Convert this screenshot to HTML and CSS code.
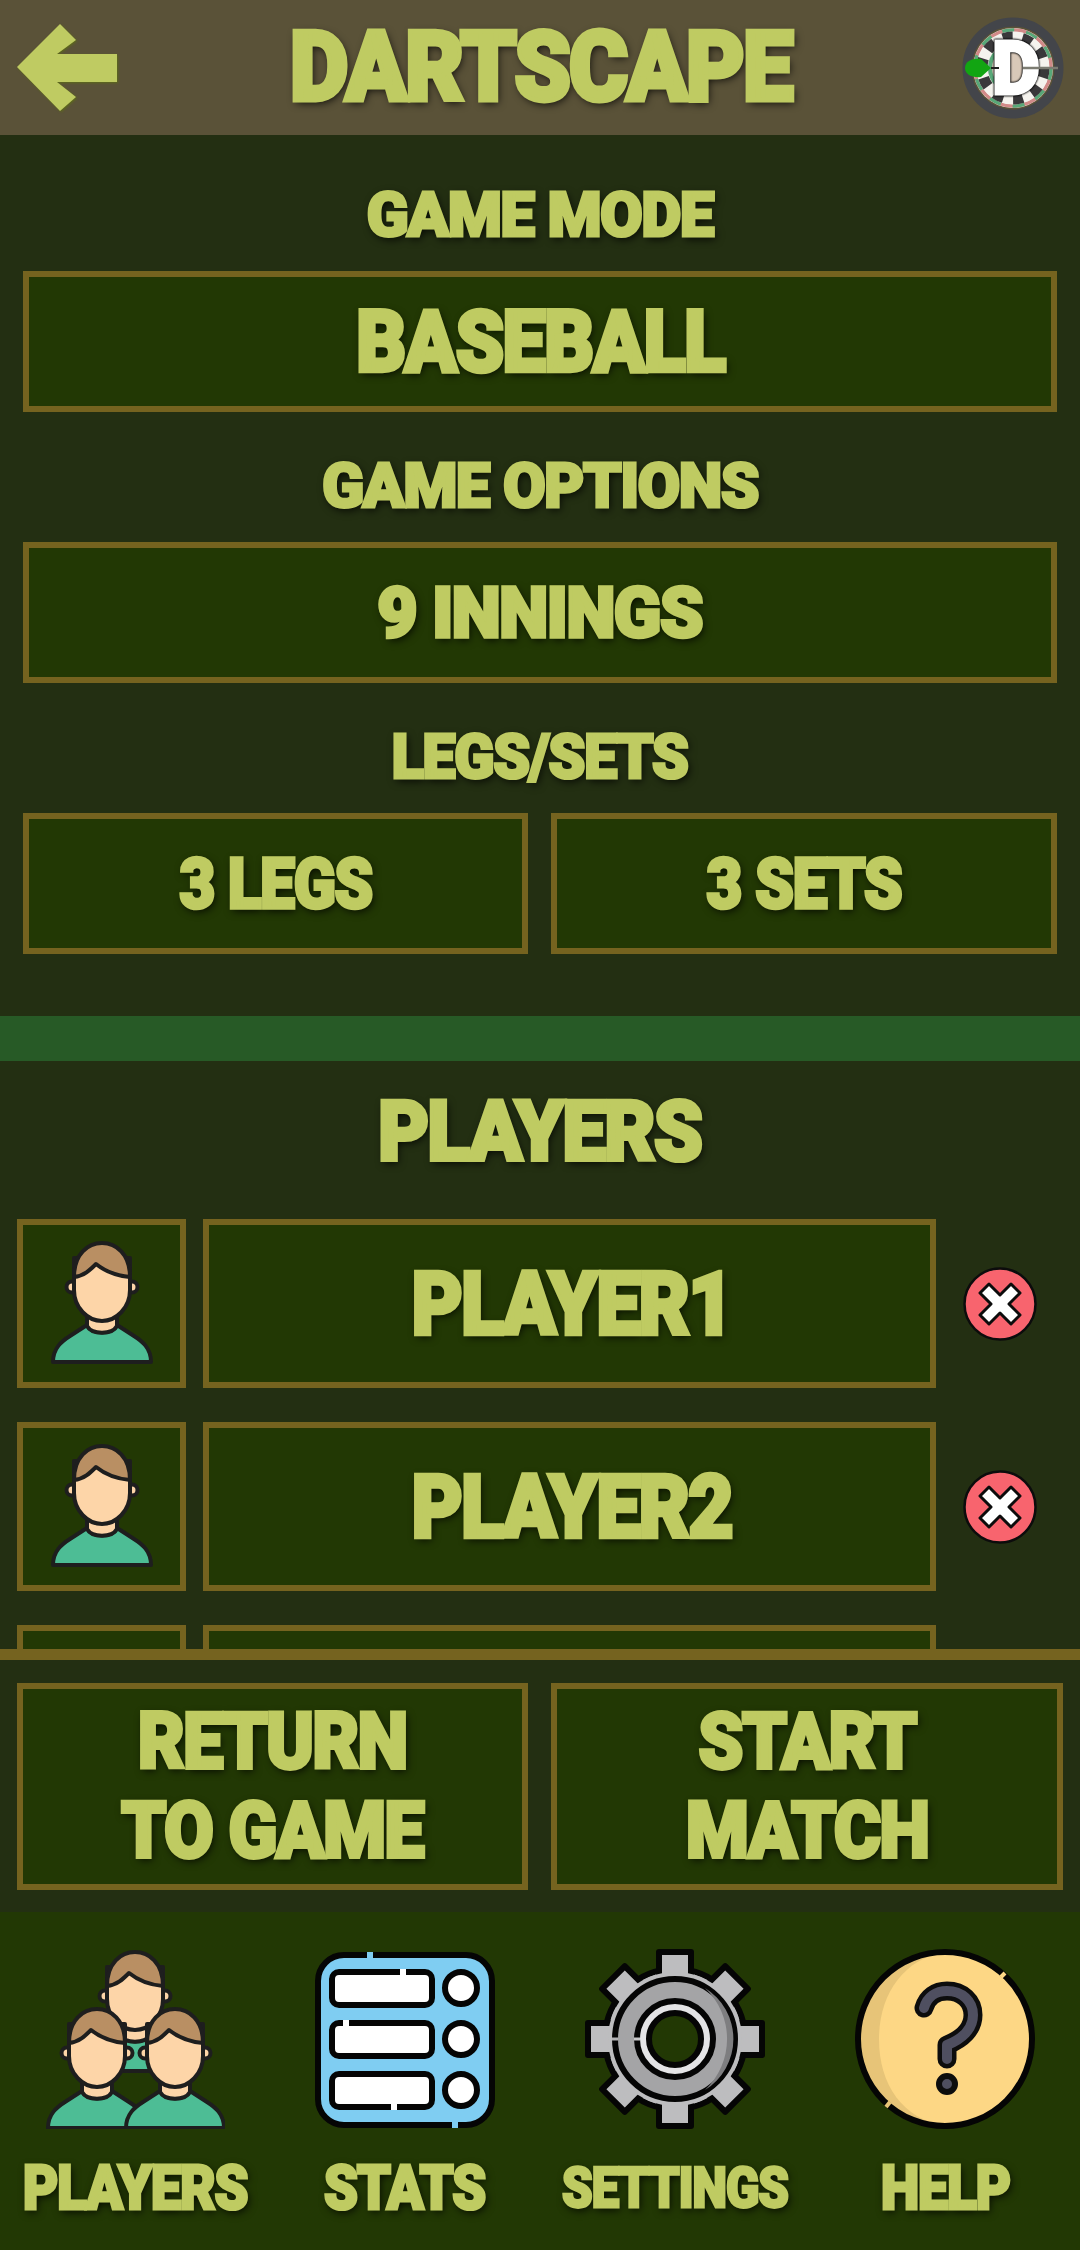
FILE: index.html
```html
<!DOCTYPE html>
<html lang="en">
<head>
<meta charset="utf-8">
<title>Dartscape</title>
<link rel="stylesheet" href="styles.css">
</head>
<body>
<svg class="defs" width="0" height="0" aria-hidden="true">
  <symbol id="person" viewBox="0 0 104 124" overflow="visible">
    <g stroke="#1e1e1e" stroke-width="4" stroke-linejoin="round">
      <path d="M3 122C3 108 12 101 20 96L37 85C42 95 62 95 67 85L84 96C92 101 101 108 101 122Z" fill="#4dbd95"/>
      <path d="M37 74V86C42 95 62 95 67 86V74Z" fill="#fdd5a8"/>
      <circle cx="22" cy="47" r="5.5" fill="#fdd5a8"/>
      <circle cx="82" cy="47" r="5.5" fill="#fdd5a8"/>
      <path d="M24 18V50C24 68 38 81 52 81C66 81 80 68 80 50V18Z" fill="#fdd5a8"/>
      <path d="M24 37C24 14 38 3 52 3C66 3 80 14 80 37C68 36 56 32 46 24C40 30 34 36 24 37Z" fill="#b98f63"/>
    </g>
  </symbol>
  <symbol id="remove" viewBox="0 0 76 76">
    <circle cx="38" cy="38" r="35.5" fill="#f8646e" stroke="#0c0c0c" stroke-width="2.5"/>
    <path d="M18 27L27 18L38 29L49 18L58 27L47 38L58 49L49 58L38 47L27 58L18 49L29 38Z" fill="#fff" stroke="#0c0c0c" stroke-width="3" stroke-linejoin="round"/>
  </symbol>
</svg>

<header class="topbar">
  <svg class="arrow" viewBox="0 0 104 90" width="104" height="90" aria-label="Back">
    <path d="M1 44L44 1L60 17L41 31H101V59H41L60 74L44 88Z" fill="#bfcb62"/>
  </svg>
  <h1 class="title"><span class="squeeze s93">DARTSCAPE</span></h1>
  <svg class="logo" viewBox="0 0 104 104" width="104" height="104" aria-label="Dartscape logo">
    <circle cx="52" cy="52" r="46" fill="none" stroke="#43454a" stroke-width="9"/>
    <circle cx="52" cy="52" r="40" fill="#e8e4dc"/>
    <circle cx="52" cy="52" r="38" fill="none" stroke="#d28a88" stroke-width="3.5"/>
    <circle cx="52" cy="52" r="38" fill="none" stroke="#58a878" stroke-width="3.5" stroke-dasharray="12 12"/>
    <circle cx="52" cy="52" r="31" fill="none" stroke="#f5f3ee" stroke-width="11"/>
    <circle cx="52" cy="52" r="31" fill="none" stroke="#39383a" stroke-width="11" stroke-dasharray="9.7 9.7"/>
    <circle cx="52" cy="52" r="23" fill="#d8c8b8" stroke="#58a878" stroke-width="4"/>
    <text class="logo-d" x="55" y="78" text-anchor="middle">D</text>
    <path d="M4 52C4 45 12 42 20 43L30 52L20 61C12 62 4 59 4 52Z" fill="#12a512"/>
    <path d="M30 52H38" stroke="#222" stroke-width="2"/>
    <path d="M62 52H97" stroke="#7c7c72" stroke-width="2.5"/>
  </svg>
</header>

<section class="setup">
  <h2 class="label"><span class="squeeze s99">GAME MODE</span></h2>
  <div class="box field"><span class="squeeze s91 value-lg">BASEBALL</span></div>
  <h2 class="label"><span class="squeeze s99">GAME OPTIONS</span></h2>
  <div class="box field"><span class="squeeze value-md s98">9 INNINGS</span></div>
  <h2 class="label"><span class="squeeze s95">LEGS/SETS</span></h2>
  <div class="pair">
    <div class="box field"><span class="squeeze value-md s87">3 LEGS</span></div>
    <div class="box field"><span class="squeeze value-md s87">3 SETS</span></div>
  </div>
</section>

<div class="band"></div>

<section class="players">
  <h2 class="players-title"><span class="squeeze s93">PLAYERS</span></h2>
  <div class="row">
    <div class="box avatar"><svg class="person" width="104" height="124"><use href="#person"/></svg></div>
    <div class="box name"><span class="squeeze s90">PLAYER1</span></div>
    <div class="remove-cell"><svg width="76" height="76"><use href="#remove"/></svg></div>
  </div>
  <div class="row">
    <div class="box avatar"><svg class="person" width="104" height="124"><use href="#person"/></svg></div>
    <div class="box name"><span class="squeeze s90">PLAYER2</span></div>
    <div class="remove-cell"><svg width="76" height="76"><use href="#remove"/></svg></div>
  </div>
  <div class="row">
    <div class="box avatar"></div>
    <div class="box name"></div>
    <div class="remove-cell"></div>
  </div>
</section>

<section class="actions">
  <div class="box action"><span class="squeeze s93">RETURN<br>TO GAME</span></div>
  <div class="box action"><span class="squeeze s93">START<br>MATCH</span></div>
</section>

<nav class="tabs">
  <div class="tab">
    <svg viewBox="0 0 180 180" width="180" height="180">
      <use href="#person" x="38" y="0" width="104" height="124"/>
      <use href="#person" x="0" y="57" width="104" height="124"/>
      <use href="#person" x="78" y="57" width="104" height="124"/>
    </svg>
    <span class="squeeze s89 tab-label">PLAYERS</span>
  </div>
  <div class="tab">
    <svg viewBox="0 0 180 180" width="180" height="180">
      <rect x="3" y="6" width="174" height="170" rx="26" fill="#7fcdf2" stroke="#050505" stroke-width="6"/>
      <g fill="#fff" stroke="#050505" stroke-width="6">
        <rect x="17" y="23" width="100" height="33" rx="7"/>
        <rect x="17" y="74" width="100" height="33" rx="7"/>
        <rect x="17" y="125" width="100" height="33" rx="7"/>
        <circle cx="146" cy="39" r="16"/>
        <circle cx="146" cy="90" r="16"/>
        <circle cx="146" cy="141" r="16"/>
      </g>
      <path d="M52 6h6M137 176h6" stroke="#7fcdf2" stroke-width="6"/>
      <path d="M85 23h6M28 74h6M76 158h6" stroke="#fff" stroke-width="6"/>
    </svg>
    <span class="squeeze s89 tab-label">STATS</span>
  </div>
  <div class="tab">
    <svg viewBox="0 0 180 180" width="180" height="180">
      <circle cx="90" cy="90" r="70" fill="#bdbdbf" stroke="#050505" stroke-width="6"/>
      <g fill="#bdbdbf" stroke="#050505" stroke-width="6" stroke-linejoin="round">
        <rect x="74" y="3" width="32" height="40"/>
        <rect x="74" y="3" width="32" height="40" transform="rotate(45 90 90)"/>
        <rect x="74" y="3" width="32" height="40" transform="rotate(90 90 90)"/>
        <rect x="74" y="3" width="32" height="40" transform="rotate(135 90 90)"/>
        <rect x="74" y="3" width="32" height="40" transform="rotate(180 90 90)"/>
        <rect x="74" y="3" width="32" height="40" transform="rotate(225 90 90)"/>
        <rect x="74" y="3" width="32" height="40" transform="rotate(270 90 90)"/>
        <rect x="74" y="3" width="32" height="40" transform="rotate(315 90 90)"/>
      </g>
      <circle cx="90" cy="90" r="67" fill="#bdbdbf"/>
      <circle cx="90" cy="90" r="60" fill="#a4a4a6" stroke="#050505" stroke-width="6"/>
      <path d="M120 39A60 60 0 0 1 120 141A70 70 0 0 0 120 39Z" fill="#7e7e80"/>
      <circle cx="90" cy="90" r="38" fill="#e4e4e6" stroke="#050505" stroke-width="6"/>
      <circle cx="90" cy="90" r="26" fill="#223804" stroke="#050505" stroke-width="6"/>
      <path d="M27 90h6" stroke="#b0b0b2" stroke-width="3"/>
      <path d="M49 90h6" stroke="#c8c8ca" stroke-width="3"/>
    </svg>
    <span class="squeeze s89 tab-label tab-label-sm">SETTINGS</span>
  </div>
  <div class="tab">
    <svg viewBox="0 0 180 180" width="180" height="180">
      <circle cx="90" cy="90" r="87" fill="#e7c478"/>
      <path d="M90 3A87 87 0 0 1 90 177C48 170 24 136 24 90C24 46 48 10 90 3Z" fill="#fdd785"/>
      <circle cx="90" cy="90" r="87" fill="none" stroke="#050505" stroke-width="6"/>
      <path d="M146 28L150 24" stroke="#fdd785" stroke-width="4"/>
      <path d="M35 153L31 158" stroke="#e7c478" stroke-width="4"/>
      <path d="M69 59C72 48 81 42 92 42C107 42 118 52 118 66C118 80 107 90 92 96V110" fill="none" stroke="#0d0d0d" stroke-width="19" stroke-linecap="round" stroke-linejoin="round"/>
      <path d="M69 59C72 48 81 42 92 42C107 42 118 52 118 66C118 80 107 90 92 96V110" fill="none" stroke="#4f4f60" stroke-width="10" stroke-linecap="round" stroke-linejoin="round"/>
      <circle cx="92" cy="135" r="8" fill="#4f4f60" stroke="#0d0d0d" stroke-width="6"/>
    </svg>
    <span class="squeeze s89 tab-label">HELP</span>
  </div>
</nav>
</body>
</html>
```
FILE: styles.css
```css
* { box-sizing: border-box; margin: 0; padding: 0; }

html, body { height: 2250px; }

body {
  display: flex;
  flex-direction: column;
  overflow: hidden;
  background: #232f12;
  color: #bfcb62;
  font-family: Roboto, "Liberation Sans", sans-serif;
  font-weight: 900;
}

.defs { position: absolute; }

.squeeze {
  display: inline-block;
  white-space: nowrap;
  text-align: center;
  transform: scaleX(.9);
  letter-spacing: -.02em;
  -webkit-text-stroke: .05em #bfcb62;
  text-shadow: 2px 3px 9px rgba(0, 0, 0, .85);
}

.s87 { transform: scaleX(.87); }
.s89 { transform: scaleX(.89); }
.s90 { transform: scaleX(.9); }
.s91 { transform: scaleX(.91); }
.s93 { transform: scaleX(.93); }
.s95 { transform: scaleX(.95); }
.s98 { transform: scaleX(.98); }
.s99 { transform: scaleX(.99); }

.topbar {
  flex: none;
  height: 135px;
  display: grid;
  grid-template-columns: 1fr auto 1fr;
  align-items: center;
  padding: 0 15px 0 16px;
  background: #5a5238;
}

.arrow { filter: drop-shadow(1px 1px 1px #5c6a18); }
.logo { justify-self: end; }
.logo-d {
  font-family: Roboto, sans-serif;
  font-size: 74px;
  font-weight: 900;
  fill: #fff;
  stroke: #fff;
  stroke-width: 3;
  filter: drop-shadow(0 0 1px #000) drop-shadow(0 0 .5px #000);
}

.title { font-size: 97px; font-weight: 900; line-height: 1; text-align: center; }

.setup { flex: none; padding: 0 23px 62px; }

.label {
  height: 130px;
  padding-top: 16px;
  display: flex;
  align-items: center;
  justify-content: center;
  font-size: 62px;
  font-weight: 900;
}
.label:first-child { height: 136px; padding-top: 22px; }

.box {
  display: flex;
  align-items: center;
  justify-content: center;
  background: #223804;
  border: 6px solid #75631f;
}

.field { height: 141px; }
.value-lg { font-size: 85px; }
.value-md { font-size: 71px; }

.pair { display: grid; grid-template-columns: 505px 1fr; gap: 23px; }

.band { flex: none; height: 45px; background: #275a26; }

.players {
  flex: 1;
  min-height: 0;
  overflow: hidden;
  padding: 0 17px;
  display: flex;
  flex-direction: column;
  gap: 34px;
}

.players-title {
  flex: none;
  height: 124px;
  display: flex;
  align-items: center;
  justify-content: center;
  padding-top: 16px;
  font-size: 84px;
  font-weight: 900;
}

.row { flex: none; height: 169px; display: flex; gap: 17px; }
.avatar { flex: none; width: 169px; }
.name { flex: none; width: 733px; padding-left: 5px; font-size: 87px; }
.remove-cell { flex: 1; display: flex; align-items: center; justify-content: center; margin-left: -17px; }
.person { margin-top: -4px; }

.actions {
  flex: none;
  display: grid;
  grid-template-columns: 511px 1fr;
  gap: 23px;
  padding: 23px 17px 22px;
  border-top: 11px solid #75631f;
}

.action { height: 207px; font-size: 77px; line-height: 89px; }

.tabs {
  flex: none;
  height: 338px;
  padding-top: 37px;
  display: grid;
  grid-template-columns: repeat(4, 1fr);
  background: #223804;
}

.tab { display: flex; flex-direction: column; align-items: center; gap: 27px; }

.tab-label { font-size: 61px; line-height: 64px; }
.tab-label-sm { font-size: 55px; }
```
